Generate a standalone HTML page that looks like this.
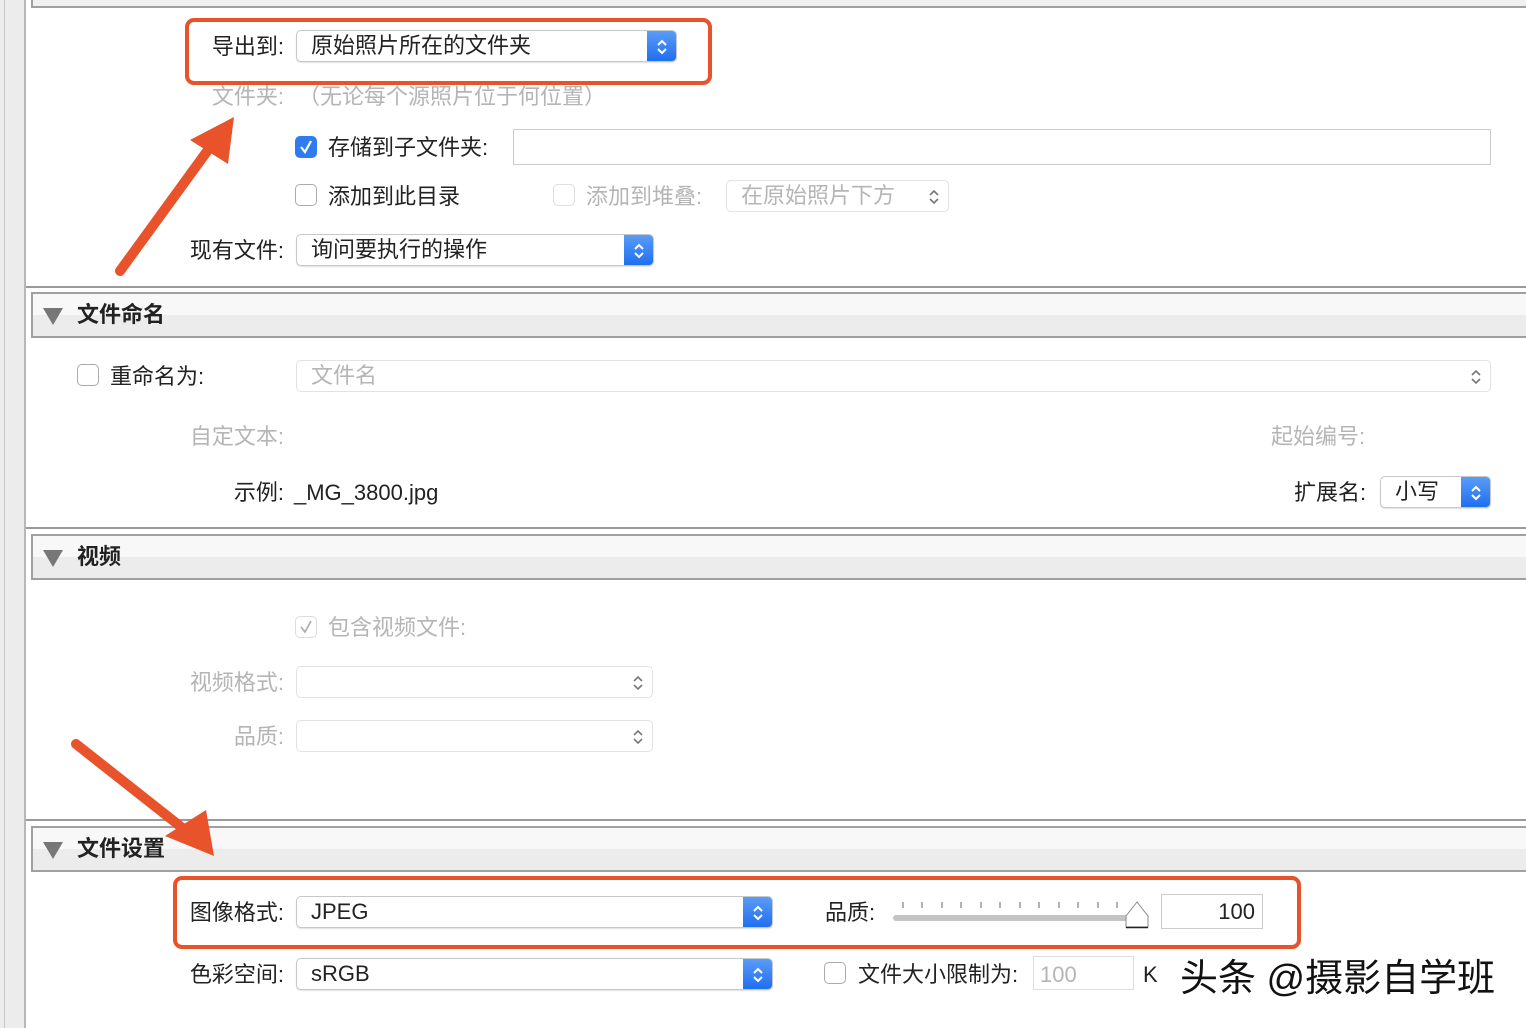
<!DOCTYPE html>
<html><head><meta charset="utf-8"><style>
*{margin:0;padding:0;box-sizing:border-box}
body{width:1526px;height:1028px;background:#fff;position:relative;overflow:hidden;font-family:"Liberation Sans","Noto Sans CJK SC",sans-serif;font-size:22px;color:#222}
.a{position:absolute}
.t{position:absolute;line-height:26px;white-space:nowrap}
.r{text-align:right}
.g{color:#b5b5b5}
.sel{position:absolute;height:32px;background:#fff;border:1px solid #c8c8c8;border-radius:5px;box-shadow:0 1px 1px rgba(0,0,0,.12);overflow:hidden}
.sel span{position:absolute;left:14px;top:2px;line-height:26px}
.sel .b{position:absolute;right:0;top:0;bottom:0;width:29px;background:linear-gradient(#5a9cf8,#1f6ff0)}
.sel.d{border-color:#e2e2e2;box-shadow:none}
.sel svg{position:absolute;right:7px;top:6px}
.cb{position:absolute;width:22px;height:22px;border:1px solid #aaa;border-radius:5px;background:#fff}
.cb.on{background:#2f7cf0;border-color:#2f7cf0}
.cb.d{border-color:#ddd}
.hd{position:absolute;left:31px;right:0;height:46px;border:2px solid #a0a0a0;border-right:none;background:linear-gradient(#f8f8f8 50%,#ececec 50%)}
.hd b{position:absolute;left:44px;top:8px;font-weight:bold;font-size:22px;line-height:26px}
.hd i{position:absolute;left:10px;top:14px;width:0;height:0;border-left:10px solid transparent;border-right:10px solid transparent;border-top:17px solid #777}
.dv{position:absolute;left:26px;right:0;height:2px;background:#9a9a9a}
.red{position:absolute;border:4px solid #e8532b;border-radius:9px}
.in{position:absolute;border:1px solid #ccc;background:#fff}
</style></head><body>
<div class="a" style="left:0;top:0;width:26px;height:1028px;background:#ececec;border-right:2px solid #b8b8b8"></div>
<div class="a" style="left:4px;top:0;width:1px;height:1028px;background:#c8c8c8"></div>
<div class="a" style="left:31px;top:0;right:0;height:8px;border:2px solid #a0a0a0;border-top:none;border-right:none;background:#f0f0f0"></div>

<div class="t r" style="left:140px;width:144px;top:34px">导出到:</div>
<div class="sel" style="left:296px;top:30px;width:381px"><span>原始照片所在的文件夹</span><div class="b"></div><svg width="14" height="20" viewBox="0 0 14 20"><path d="M3 8L7 4L11 8M3 12L7 16L11 12" stroke="#fff" stroke-width="2" fill="none"/></svg></div>
<div class="red" style="left:185px;top:18px;width:527px;height:67px"></div>

<div class="t r g" style="left:140px;width:144px;top:84px">文件夹:</div>
<div class="t g" style="left:298px;top:84px">（无论每个源照片位于何位置）</div>

<div class="cb on" style="left:295px;top:136px"><svg width="20" height="20" viewBox="0 0 20 20"><path d="M5 10L9 15L15 4" stroke="#fff" stroke-width="2.2" fill="none"/></svg></div>
<div class="t" style="left:328px;top:135px">存储到子文件夹:</div>
<div class="in" style="left:513px;top:129px;width:978px;height:36px"></div>

<div class="cb" style="left:295px;top:184px"></div>
<div class="t" style="left:328px;top:184px">添加到此目录</div>
<div class="cb d" style="left:553px;top:184px"></div>
<div class="t g" style="left:586px;top:184px">添加到堆叠:</div>
<div class="sel d" style="left:726px;top:180px;width:223px"><span class="g">在原始照片下方</span><svg width="14" height="20" viewBox="0 0 14 20"><path d="M3 8L7 4L11 8M3 12L7 16L11 12" stroke="#777" stroke-width="1.6" fill="none"/></svg></div>

<div class="t r" style="left:140px;width:144px;top:238px">现有文件:</div>
<div class="sel" style="left:296px;top:234px;width:358px"><span>询问要执行的操作</span><div class="b"></div><svg width="14" height="20" viewBox="0 0 14 20"><path d="M3 8L7 4L11 8M3 12L7 16L11 12" stroke="#fff" stroke-width="2" fill="none"/></svg></div>

<div class="dv" style="top:286px"></div>
<div class="hd" style="top:292px"><i></i><b>文件命名</b></div>

<div class="cb" style="left:77px;top:364px"></div>
<div class="t" style="left:110px;top:364px">重命名为:</div>
<div class="sel d" style="left:296px;top:360px;width:1195px"><span class="g">文件名</span><svg width="14" height="20" viewBox="0 0 14 20"><path d="M3 8L7 4L11 8M3 12L7 16L11 12" stroke="#777" stroke-width="1.6" fill="none"/></svg></div>
<div class="t r g" style="left:140px;width:144px;top:424px">自定文本:</div>
<div class="t g" style="left:1271px;top:424px">起始编号:</div>
<div class="t r" style="left:140px;width:144px;top:480px">示例:</div>
<div class="t" style="left:294px;top:480px">_MG_3800.jpg</div>
<div class="t" style="left:1294px;top:480px">扩展名:</div>
<div class="sel" style="left:1380px;top:476px;width:111px"><span>小写</span><div class="b"></div><svg width="14" height="20" viewBox="0 0 14 20"><path d="M3 8L7 4L11 8M3 12L7 16L11 12" stroke="#fff" stroke-width="2" fill="none"/></svg></div>

<div class="dv" style="top:527px"></div>
<div class="hd" style="top:534px"><i></i><b>视频</b></div>

<div class="cb d" style="left:295px;top:616px"><svg width="20" height="20" viewBox="0 0 20 20"><path d="M5 10L9 15L15 4" stroke="#aaa" stroke-width="1.6" fill="none"/></svg></div>
<div class="t g" style="left:328px;top:615px">包含视频文件:</div>
<div class="t r g" style="left:140px;width:144px;top:670px">视频格式:</div>
<div class="sel d" style="left:296px;top:666px;width:357px"><svg width="14" height="20" viewBox="0 0 14 20"><path d="M3 8L7 4L11 8M3 12L7 16L11 12" stroke="#777" stroke-width="1.6" fill="none"/></svg></div>
<div class="t r g" style="left:140px;width:144px;top:724px">品质:</div>
<div class="sel d" style="left:296px;top:720px;width:357px"><svg width="14" height="20" viewBox="0 0 14 20"><path d="M3 8L7 4L11 8M3 12L7 16L11 12" stroke="#777" stroke-width="1.6" fill="none"/></svg></div>

<div class="dv" style="top:819px"></div>
<div class="hd" style="top:826px"><i></i><b>文件设置</b></div>

<div class="t r" style="left:140px;width:144px;top:900px">图像格式:</div>
<div class="sel" style="left:296px;top:896px;width:477px"><span>JPEG</span><div class="b"></div><svg width="14" height="20" viewBox="0 0 14 20"><path d="M3 8L7 4L11 8M3 12L7 16L11 12" stroke="#fff" stroke-width="2" fill="none"/></svg></div>
<div class="t" style="left:825px;top:900px">品质:</div>
<svg class="a" style="left:890px;top:896px" width="262" height="36">
<rect x="3" y="19" width="245" height="6" rx="3" fill="#c4c4c4"/>
<g stroke="#999" stroke-width="1.5">
<line x1="13" y1="6" x2="13" y2="12"/><line x1="32" y1="6" x2="32" y2="12"/><line x1="52" y1="6" x2="52" y2="12"/><line x1="71" y1="6" x2="71" y2="12"/><line x1="91" y1="6" x2="91" y2="12"/><line x1="110" y1="6" x2="110" y2="12"/><line x1="130" y1="6" x2="130" y2="12"/><line x1="149" y1="6" x2="149" y2="12"/><line x1="169" y1="6" x2="169" y2="12"/><line x1="188" y1="6" x2="188" y2="12"/><line x1="208" y1="6" x2="208" y2="12"/><line x1="227" y1="6" x2="227" y2="12"/><line x1="247" y1="6" x2="247" y2="12"/></g>
<path d="M236 31L236 20L247 6L258 20L258 31Z" fill="#fff" stroke="#888" stroke-width="1"/>
<line x1="236" y1="31.5" x2="258" y2="31.5" stroke="#222" stroke-width="1.5"/>
</svg>
<div class="in" style="left:1161px;top:894px;width:102px;height:35px"></div>
<div class="t" style="left:1161px;width:94px;top:899px;text-align:right">100</div>
<div class="red" style="left:173px;top:876px;width:1128px;height:73px"></div>

<div class="t r" style="left:140px;width:144px;top:962px">色彩空间:</div>
<div class="sel" style="left:296px;top:958px;width:477px"><span>sRGB</span><div class="b"></div><svg width="14" height="20" viewBox="0 0 14 20"><path d="M3 8L7 4L11 8M3 12L7 16L11 12" stroke="#fff" stroke-width="2" fill="none"/></svg></div>
<div class="cb" style="left:824px;top:962px"></div>
<div class="t" style="left:858px;top:962px">文件大小限制为:</div>
<div class="in" style="left:1033px;top:956px;width:101px;height:34px;border-color:#ddd"></div>
<div class="t g" style="left:1040px;top:962px">100</div>
<div class="t" style="left:1143px;top:962px">K</div>
<div class="t" style="left:1180px;top:956px;font-size:38px;line-height:46px;color:#111;text-shadow:2px 2px 0 #fff,-1px -1px 0 #fff">头条 @摄影自学班</div>

<svg class="a" style="left:0;top:0" width="300" height="900">
<line x1="120" y1="271" x2="208" y2="150" stroke="#e8532b" stroke-width="10" stroke-linecap="round"/>
<polygon points="234,117 190,140 228,164" fill="#e8532b"/>
<line x1="76" y1="744" x2="185" y2="830" stroke="#e8532b" stroke-width="10" stroke-linecap="round"/>
<polygon points="214,856 165,836 206,810" fill="#e8532b"/>
</svg>
</body></html>
